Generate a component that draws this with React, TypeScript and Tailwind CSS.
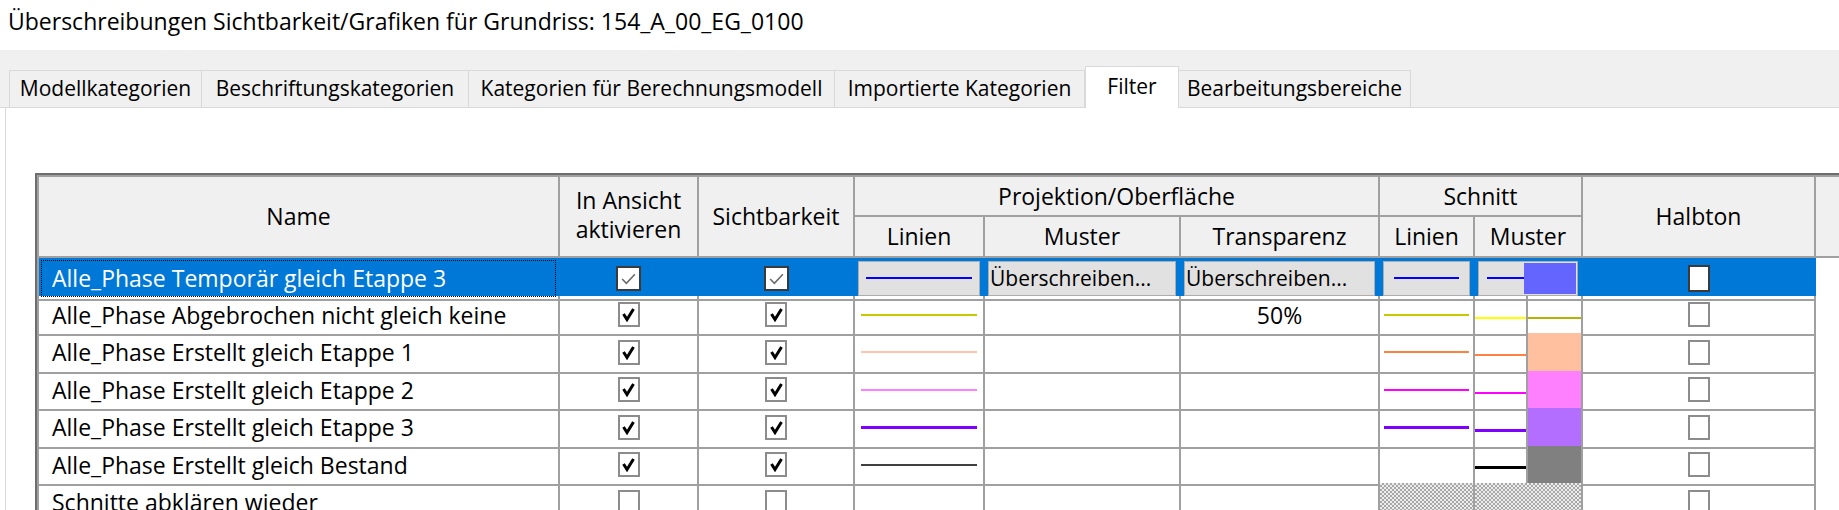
import React from 'react';

type Row = {
  name: string;
  selected?: boolean;
  proj?: string;
  transp?: string;
  cut?: string;
  cutPat?: string;
  patLine?: string;
  fill?: string;
  lineW?: number;
  hatch?: boolean;
  on?: boolean;
};

const rows: Row[] = [
  { name: 'Alle_Phase Temporär gleich Etappe 3', selected: true, on: true, proj: '#0000ff', cut: '#0000ff', cutPat: '#0000ff', fill: '#6464ff' },
  { name: 'Alle_Phase Abgebrochen nicht gleich keine', on: true, proj: '#c8c800', transp: '50%', cut: '#c8c800', cutPat: '#ffff00', patLine: '#b4b400' },
  { name: 'Alle_Phase Erstellt gleich Etappe 1', on: true, proj: '#ffc4ac', cut: '#ff8040', cutPat: '#ff8040', fill: '#ffc0a0' },
  { name: 'Alle_Phase Erstellt gleich Etappe 2', on: true, proj: '#ff80ff', cut: '#ff00ff', cutPat: '#ff00ff', fill: '#ff80ff' },
  { name: 'Alle_Phase Erstellt gleich Etappe 3', on: true, proj: '#8000ff', cut: '#8000ff', cutPat: '#8000ff', fill: '#b46eff', lineW: 3 },
  { name: 'Alle_Phase Erstellt gleich Bestand', on: true, proj: '#404040', cutPat: '#000000', fill: '#808080' },
  { name: 'Schnitte abklären wieder', hatch: true },
];

const tabs = [
  { label: 'Modellkategorien', w: 'w-[193px]' },
  { label: 'Beschriftungskategorien', w: 'w-[267px]' },
  { label: 'Kategorien für Berechnungsmodell', w: 'w-[366px]' },
  { label: 'Importierte Kategorien', w: 'w-[250px]' },
  { label: 'Filter', w: 'w-[94px]' },
  { label: 'Bearbeitungsbereiche', w: 'w-[232px]' },
];

const cols = 'grid grid-cols-[521px_139px_156px_130px_196px_199px_95px_108px_233px_1fr]';
const hd = 'border-r-2 border-b-2 border-[#a0a0a0] bg-[#f0f0f0] flex items-center justify-center text-center';
const hatchBg = 'bg-[image:repeating-conic-gradient(#a8a8a8_0_25%,#ececec_0_50%)] bg-size-[4px_4px]';

function Line({ color, w = 2 }: { color?: string; w?: number }) {
  if (!color) return null;
  return <div className="w-full" style={{ background: color, height: w }} />;
}

function Box({ checked, selected, tall }: { checked?: boolean; selected?: boolean; tall?: boolean }) {
  if (selected) {
    return (
      <div className={`bg-white border-2 border-[#3a3a3a] flex items-center justify-center ${tall ? 'w-[22px] h-[27px]' : 'w-[25px] h-[25px]'}`}>
        {checked && (
          <svg width="17" height="15" viewBox="0 0 16 14">
            <path d="M2 7.5 L6 11.5 L14 3" fill="none" stroke="#6a6a6a" strokeWidth="1.5" />
          </svg>
        )}
      </div>
    );
  }
  return (
    <div className="w-[22px] h-[25px] bg-white border-2 border-[#8c8c8c] flex items-center justify-center">
      {checked && (
        <svg width="13" height="15" viewBox="0 0 13 15">
          <path d="M1.5 7 L5 12.5 L11.5 2" fill="none" stroke="#000" strokeWidth="3" strokeLinejoin="miter" />
        </svg>
      )}
    </div>
  );
}

function Btn({ children, className = '' }: { children?: React.ReactNode; className?: string }) {
  return (
    <div className={`mx-[3px] my-[3px] flex-1 self-stretch bg-[#e1e1e1] border border-[#adadad] flex items-center overflow-hidden whitespace-nowrap ${className}`}>
      {children}
    </div>
  );
}

function BodyRow({ r }: { r: Row }) {
  const sel = !!r.selected;
  const cell = `border-r-2 border-b-2 ${sel ? 'border-r-[#0078d7] border-b-[#a0a0a0]' : 'border-[#a0a0a0]'} flex items-center`;
  return (
    <div className={`${cols} h-[37.5px] ${sel ? 'bg-[#0078d7] text-white' : 'bg-white'}`}>
      <div className={`${cell} p-[2px]`}>
        <div className={`flex-1 self-stretch flex items-center whitespace-nowrap ${sel ? 'pl-[10px] border border-dotted border-black' : 'pl-[11px]'}`}>
          {r.name}
        </div>
      </div>
      <div className={`${cell} justify-center`}>
        <Box checked={r.on} selected={sel} />
      </div>
      <div className={`${cell} justify-center`}>
        <Box checked={r.on} selected={sel} />
      </div>
      <div className={cell}>
        {sel ? (
          <Btn className="px-[7px]"><Line color={r.proj} /></Btn>
        ) : (
          <div className="flex-1 px-[6px]"><Line color={r.proj} w={r.lineW} /></div>
        )}
      </div>
      <div className={cell}>
        {sel && <Btn className="pl-[1px] text-black text-[21px]">Überschreiben...</Btn>}
      </div>
      <div className={`${cell} justify-center`}>
        {sel ? <Btn className="pl-[1px] text-black text-[21px]">Überschreiben...</Btn> : <span>{r.transp}</span>}
      </div>
      <div className={`${cell} ${r.hatch ? hatchBg : ''}`}>
        {sel ? (
          <Btn className="px-[10px]"><Line color={r.cut} /></Btn>
        ) : (
          <div className="flex-1 px-[4px]"><Line color={r.cut} w={r.lineW} /></div>
        )}
      </div>
      <div className={`${cell} ${r.hatch ? hatchBg : ''}`}>
        {sel ? (
          <Btn className="pl-[8px] pr-[1px] py-[1px]">
            <div className="flex-1"><Line color={r.cutPat} /></div>
            <div className="w-[52px] self-stretch" style={{ background: r.fill }} />
          </Btn>
        ) : !r.hatch ? (
          <>
            <div className="flex-1 self-stretch flex items-center pt-[6px]">
              <Line color={r.cutPat} w={r.lineW ?? (r.cutPat === '#000000' ? 3 : 2)} />
            </div>
            <div
              className="w-[55px] self-stretch border-l-2 border-[#a0a0a0] flex items-center pt-[6px]"
              style={{ background: r.fill }}
            >
              <Line color={r.patLine} />
            </div>
          </>
        ) : null}
      </div>
      <div className={`${cell} justify-center`}>
        <Box selected={sel} tall />
      </div>
      <div className={sel ? 'bg-white' : ''} />
    </div>
  );
}

export default function App() {
  return (
    <div className="w-[1839px] h-[510px] overflow-hidden bg-white text-black font-['Open_Sans',sans-serif]">
      <div className="h-[50px] pl-[8px] pt-[5px] text-[23px] leading-[32px] whitespace-nowrap">
        Überschreibungen Sichtbarkeit/Grafiken für Grundriss: 154_A_00_EG_0100
      </div>
      <div className="h-[58px] bg-[#f0f0f0] border-b border-[#d9d9d9] flex items-end pl-[9px]">
        {tabs.map((t, i) =>
          t.label === 'Filter' ? (
            <div
              key={t.label}
              className={`${t.w} h-[42px] -mb-px bg-white border border-b-0 border-[#d9d9d9] flex items-start justify-center pt-[4px] text-[21px] whitespace-nowrap`}
            >
              {t.label}
            </div>
          ) : (
            <div
              key={t.label}
              className={`${t.w} h-[37px] border-t border-r ${i === 0 ? 'border-l' : ''} border-[#d9d9d9] flex items-center justify-center text-[21px] whitespace-nowrap`}
            >
              {t.label}
            </div>
          )
        )}
      </div>
      <div className="ml-[5px] border-l border-[#d9d9d9] pl-[29px] pt-[65px] h-[402px]">
        <div className="border-l-2 border-t-2 border-[#6e6e6e]">
          <div className="border-l-2 border-t-2 border-[#a0a0a0] text-[23px]">
            <div className={`${cols} grid-rows-[40px_41px]`}>
              <div className={`${hd} row-span-2`}>Name</div>
              <div className={`${hd} row-span-2 leading-[29px] pb-[4px]`}>
                In Ansicht
                <br />
                aktivieren
              </div>
              <div className={`${hd} row-span-2`}>Sichtbarkeit</div>
              <div className={`${hd} col-span-3`}>Projektion/Oberfläche</div>
              <div className={`${hd} col-span-2`}>Schnitt</div>
              <div className={`${hd} row-span-2`}>Halbton</div>
              <div className="row-span-2 bg-[#f0f0f0] border-b-2 border-[#a0a0a0]" />
              <div className={hd}>Linien</div>
              <div className={hd}>Muster</div>
              <div className={hd}>Transparenz</div>
              <div className={hd}>Linien</div>
              <div className={hd}>Muster</div>
            </div>
            {rows.map((r) => (
              <BodyRow key={r.name} r={r} />
            ))}
          </div>
        </div>
      </div>
    </div>
  );
}
